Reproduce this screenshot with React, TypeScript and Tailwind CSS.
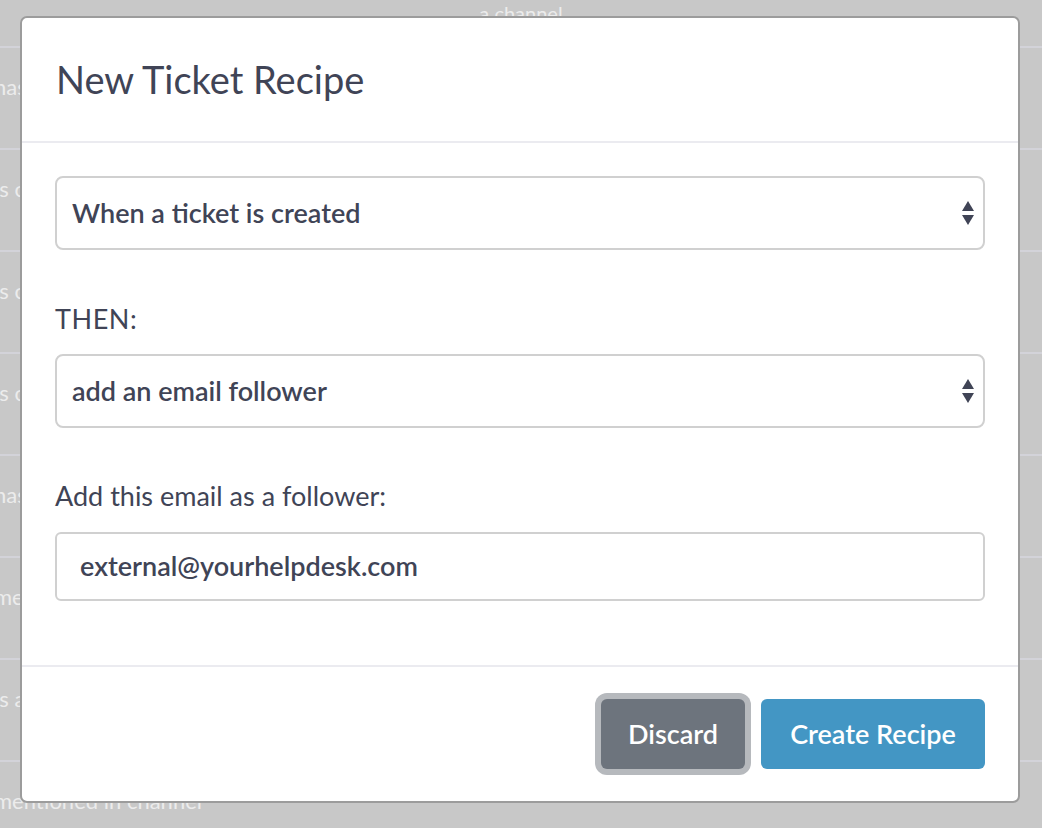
import React from 'react';

const rows = [
  'has created a ticket',
  'is created in channel',
  'is closed by agent',
  'is created via email',
  'has been assigned',
  'mentions a keyword',
  'is assigned to team',
  'mentioned in channel',
];

const SelectArrows = () => (
  <svg width="14" height="26" viewBox="0 0 14 26" className="shrink-0">
    <path d="M7 1 L13 11 L1 11 Z" fill="#404456" />
    <path d="M1 15 L13 15 L7 25 Z" fill="#404456" />
  </svg>
);

const FakeSelect = ({ value }: { value: string }) => (
  <div className="h-[74px] w-full rounded-[8px] border-2 border-[#d0d0d0] flex items-center justify-between pl-[15px] pr-[8px]">
    <span className="text-[27px] font-semibold text-[#404456]">{value}</span>
    <SelectArrows />
  </div>
);

export default function App() {
  return (
    <div
      className="relative h-[828px] w-full overflow-hidden bg-[#c8c8c8]"
      style={{ fontFamily: 'Lato, "Open Sans", sans-serif' }}
    >
      {/* background table behind the overlay */}
      <div className="flex flex-col">
        <div className="h-[48px] border-b-2 border-[#d3d3d9] flex justify-center">
          <span className="text-[20px] text-[#ececec] -mt-[2px]">a channel</span>
        </div>
        {rows.map((r) => (
          <div key={r} className="h-[102px] border-b-2 border-[#d3d3d9] flex pt-[22px]">
            <span className="-ml-[6px] text-[22px] text-[#ececec] whitespace-nowrap">{r}</span>
          </div>
        ))}
      </div>

      {/* modal */}
      <div className="absolute left-[20px] top-[16px] w-[1000px] h-[787px] bg-white rounded-[7px] border-2 border-[#9c9c9c] flex flex-col text-[#404456]">
        <div className="h-[125px] shrink-0 border-b-2 border-[#ebebf0] flex items-center px-[34px]">
          <h1 className="text-[38px] leading-none pb-[2px]">New Ticket Recipe</h1>
        </div>

        <div className="flex flex-col px-[33px] pt-[33px] pb-[64px] border-b-2 border-[#ebebf0]">
          <FakeSelect value="When a ticket is created" />
          <div className="mt-[54px] text-[27px] leading-[30px] tracking-[0.02em]">THEN:</div>
          <div className="mt-[20px]">
            <FakeSelect value="add an email follower" />
          </div>
          <div className="mt-[53px] text-[27px] leading-[30px]">Add this email as a follower:</div>
          <div className="mt-[21px] h-[69px] rounded-[6px] border-2 border-[#d0d0d0] flex items-center px-[23px]">
            <span className="text-[27px] font-semibold">external@yourhelpdesk.com</span>
          </div>
        </div>

        <div className="flex justify-end items-start gap-[16px] px-[33px] pt-[32px]">
          <button className="h-[70px] w-[144px] rounded-[6px] bg-[#6d747d] text-white text-[27px] font-semibold ring-[6px] ring-[#b6b9bd]">
            Discard
          </button>
          <button className="h-[70px] w-[224px] rounded-[6px] bg-[#4396c4] text-white text-[27px] font-semibold">
            Create Recipe
          </button>
        </div>
      </div>
    </div>
  );
}
